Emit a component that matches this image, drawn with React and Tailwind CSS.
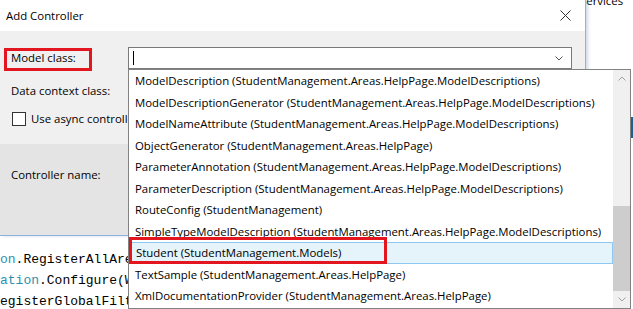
import React from "react";

const items = [
  "ModelDescription (StudentManagement.Areas.HelpPage.ModelDescriptions)",
  "ModelDescriptionGenerator (StudentManagement.Areas.HelpPage.ModelDescriptions)",
  "ModelNameAttribute (StudentManagement.Areas.HelpPage.ModelDescriptions)",
  "ObjectGenerator (StudentManagement.Areas.HelpPage)",
  "ParameterAnnotation (StudentManagement.Areas.HelpPage.ModelDescriptions)",
  "ParameterDescription (StudentManagement.Areas.HelpPage.ModelDescriptions)",
  "RouteConfig (StudentManagement)",
  "SimpleTypeModelDescription (StudentManagement.Areas.HelpPage.ModelDescriptions)",
  "Student (StudentManagement.Models)",
  "TextSample (StudentManagement.Areas.HelpPage)",
  "XmlDocumentationProvider (StudentManagement.Areas.HelpPage)",
];

const ui = { fontFamily: '"Open Sans", "Noto Sans", sans-serif' };

export default function App() {
  return (
    <div
      className="relative w-[633px] h-[309px] overflow-hidden bg-white text-black"
      style={ui}
    >
      <div className="flex">
        {/* Dialog */}
        <div className="relative z-10 w-[586px] h-[236px] flex flex-col border-r border-b border-[#8fb2dc] shadow-[2px_0_3px_rgba(120,150,190,0.35)]">
          <div className="h-[31px] bg-white flex items-center justify-between pl-[6px] pr-[12px]">
            <span className="text-[11.4px] leading-none">Add Controller</span>
            <svg width="11" height="11" viewBox="0 0 11 11" className="mr-[2px]">
              <path d="M0.5 0.5 L10.5 10.5 M10.5 0.5 L0.5 10.5" stroke="#333" strokeWidth="1" fill="none" />
            </svg>
          </div>
          <div className="h-[113px] bg-[#f0f0f0] flex flex-col pt-[16px]">
            <div className="flex items-center h-[22px]">
              <span className="w-[128px] pl-[11px] text-[11.4px]">Model class:</span>
              <div className="w-[444px] h-[22px] border border-[#7a7a7a] bg-white flex items-center justify-between pl-[4px] pr-[8px]">
                <span className="w-px h-[14px] bg-black" />
                <svg width="8" height="5" viewBox="0 0 8 5">
                  <path d="M0.5 0.5 L4 4 L7.5 0.5" stroke="#555" strokeWidth="1" fill="none" />
                </svg>
              </div>
            </div>
            <div className="flex items-center h-[22px] mt-[11px] pl-[11px] text-[11.4px]">
              Data context class:
            </div>
            <div className="flex items-center h-[22px] mt-[6px] pl-[12px] text-[11.4px]">
              <span className="w-[14px] h-[14px] border border-[#333] bg-white mr-[5px]" />
              <span>Use async controller actions</span>
            </div>
          </div>
          <div className="flex-1 bg-[#e4e4e4] pt-[20px]">
            <div className="flex items-center h-[22px] pl-[11px] text-[11.4px]">Controller name:</div>
          </div>
        </div>
        {/* right strip */}
        <div className="flex-1 bg-white">
          <div className="-ml-[6px] -mt-[8px] text-[11.4px]">Services</div>
        </div>
      </div>

      {/* Code editor behind */}
      <div
        className="pt-[13px] text-[13px] leading-[21px] whitespace-pre"
        style={{ fontFamily: '"Liberation Mono", "DejaVu Sans Mono", monospace' }}
      >
        <div>
          <span className="text-[#2b91af]">on</span>.RegisterAllAreas();
        </div>
        <div>
          <span className="text-[#2b91af]">ation</span>.Configure(WebApiConfig.Register);
        </div>
        <div>egisterGlobalFilters(GlobalFilters.Filters);</div>
      </div>

      {/* dark element behind at right edge */}
      <div className="absolute left-[631px] top-[117px] w-[2px] h-[21px] bg-[#1f5f8b]" />

      {/* Dropdown list */}
      <div className="absolute z-20 left-[128px] top-[69px] w-[503px] h-[240px] border border-[#828282] bg-white flex">
        <div className="flex-1 min-w-0 overflow-hidden flex flex-col">
          {items.map((t, i) => (
            <div
              key={t}
              className={
                i === 8
                  ? "shrink-0 h-[21.5px] flex items-center pl-[5px] ml-[1px] border border-[#8ec8f2] bg-[#e5f3fb] text-[11.4px] whitespace-nowrap"
                  : "shrink-0 h-[21.5px] flex items-center pl-[6px] text-[11.4px] whitespace-nowrap"
              }
            >
              {t}
            </div>
          ))}
        </div>
        <div className="shrink-0 w-[17px] bg-[#f0f0f0] flex flex-col items-center">
          <div className="h-[17px] flex items-center justify-center">
            <svg width="8" height="5" viewBox="0 0 8 5">
              <path d="M0.5 4.5 L4 1 L7.5 4.5" stroke="#a0a0a0" strokeWidth="1" fill="none" />
            </svg>
          </div>
          <div className="mt-[119px] w-[17px] h-[85px] bg-[#cdcdcd]" />
          <div className="h-[17px] flex items-center justify-center">
            <svg width="8" height="5" viewBox="0 0 8 5">
              <path d="M0.5 0.5 L4 4 L7.5 0.5" stroke="#a0a0a0" strokeWidth="1" fill="none" />
            </svg>
          </div>
        </div>
      </div>

      {/* Red annotation boxes */}
      <div className="absolute z-30 left-[4px] top-[48px] w-[88px] h-[23px] border-[3px] border-[#e3151e]" />
      <div className="absolute z-30 left-[129px] top-[237px] w-[258px] h-[27px] border-[3px] border-[#e3151e]" />
    </div>
  );
}
